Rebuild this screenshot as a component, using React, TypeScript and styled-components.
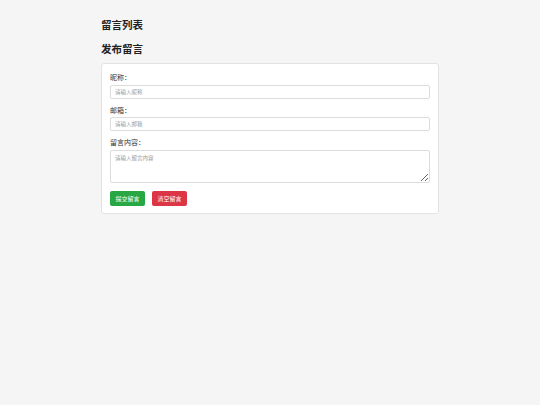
import styled, { createGlobalStyle } from "styled-components";

const GlobalStyle = createGlobalStyle`
    body {
        margin: 0;
        background: #f5f5f5;
        font-family: "Liberation Sans", "Noto Sans CJK SC", sans-serif;
        color: #333;
    }
`;

const App = () => {
    return (
        <>
            <GlobalStyle />
            <Container>
                <Title>留言列表</Title>
                <Title>发布留言</Title>
                <FormCard>
                    <FormGroup>
                        <Label>昵称：</Label>
                        <Input type="text" placeholder="请输入昵称" />
                    </FormGroup>
                    <FormGroup>
                        <Label>邮箱：</Label>
                        <Input type="email" placeholder="请输入邮箱" />
                    </FormGroup>
                    <FormGroup>
                        <Label>留言内容：</Label>
                        <TextArea placeholder="请输入留言内容" />
                    </FormGroup>
                    <ButtonRow>
                        <ActionButton $variant="submit">提交留言</ActionButton>
                        <ActionButton $variant="clear">清空留言</ActionButton>
                    </ButtonRow>
                </FormCard>
            </Container>
        </>
    );
};

export default App;

const Container = styled.div`
    width: 338px;
    margin: 0 auto;
    padding-top: 18px;
`;

const Title = styled.h2`
    margin: 0 0 10px;
    font-size: 10.5px;
    line-height: 14px;
    font-weight: 700;
    color: #222;
`;

const FormCard = styled.div`
    margin-top: -3px;
    background: #fff;
    border: 1px solid #e3e3e3;
    border-radius: 3px;
    padding: 9px 8px 7px;
`;

const FormGroup = styled.div`
    display: flex;
    flex-direction: column;
    margin-bottom: 7px;
`;

const Label = styled.label`
    font-size: 7px;
    line-height: 9px;
    color: #333;
    margin-bottom: 2.5px;
`;

const Input = styled.input`
    box-sizing: border-box;
    width: 100%;
    height: 14px;
    padding: 0 4px;
    border: 1px solid #dcdcdc;
    border-radius: 2px;
    font-size: 5.5px;
    font-family: inherit;
    outline: none;

    &::placeholder {
        color: #999;
    }
`;

const TextArea = styled.textarea`
    box-sizing: border-box;
    width: 100%;
    height: 33px;
    padding: 3px 4px;
    border: 1px solid #dcdcdc;
    border-radius: 2px;
    font-size: 5.5px;
    font-family: inherit;
    outline: none;

    &::placeholder {
        color: #999;
    }
`;

const ButtonRow = styled.div`
    display: flex;
    gap: 7px;
    margin-top: 8px;
`;

const ActionButton = styled.button<{ $variant: "submit" | "clear" }>`
    width: 35px;
    height: 15px;
    padding: 0;
    border: none;
    border-radius: 2px;
    background: ${({ $variant }) => ($variant === "submit" ? "#28a745" : "#dc3545")};
    color: #fff;
    font-size: 6px;
    font-family: inherit;
    cursor: pointer;
`;
